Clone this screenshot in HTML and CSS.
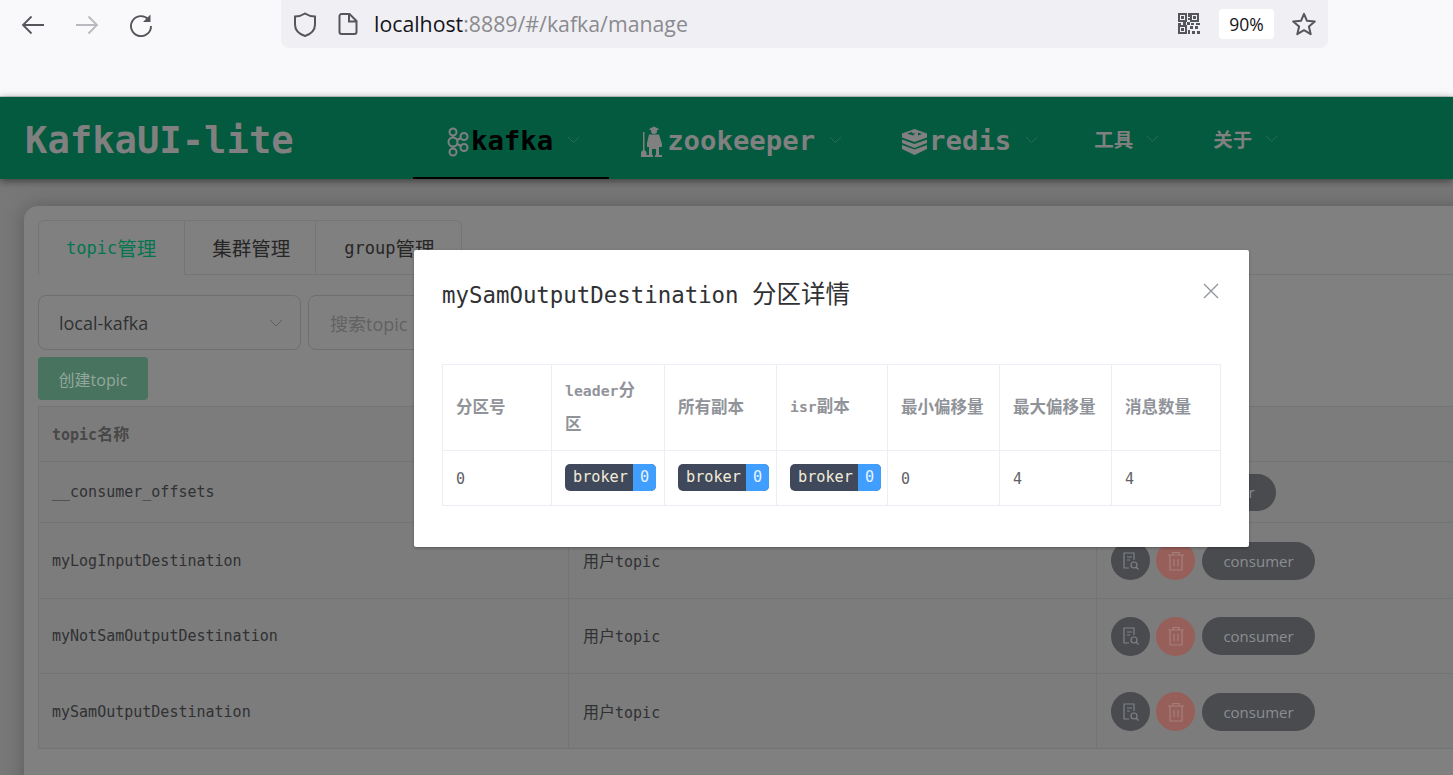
FILE: index.html
```html
<!DOCTYPE html>
<html lang="zh">
<head>
  <meta charset="UTF-8" />
  <title>KafkaUI-lite</title>
  <link rel="stylesheet" href="styles.css">
</head>
<body>

  <div class="browser-bar">
    <div class="nav-btns">
      <svg class="ico" width="24" height="24" viewBox="0 0 24 24"><path d="M23 12H2M10.500 3.500 2 12l8.500 8.500" fill="none" stroke="#55555c" stroke-width="1.800"/></svg>
      <svg class="ico" width="24" height="24" viewBox="0 0 24 24"><path d="M1 12h21M13.500 3.500 22 12l-8.500 8.500" fill="none" stroke="#b9b9bf" stroke-width="1.800"/></svg>
      <svg class="ico" width="24" height="24" viewBox="0 0 24 24"><path d="M19.500 6.500A10 10 0 1 0 22 13" fill="none" stroke="#55555c" stroke-width="1.900"/><path d="M21.500 1.500v7.500H14z" fill="#55555c"/></svg>
    </div>
    <div class="address">
      <svg class="shield" width="24" height="25" viewBox="0 0 24 25"><path d="M12 1.500c3 2 6.500 3 10 3v8c0 5.500-4 9.500-10 11.500C6 22 2 18 2 12.500v-8c3.500 0 7-1 10-3z" fill="none" stroke="#55555c" stroke-width="2"/></svg>
      <svg class="page" width="20" height="22" viewBox="0 0 20 22"><path d="M3.500 1h8l7 7v11a2 2 0 0 1-2 2h-13a2 2 0 0 1-2-2V3a2 2 0 0 1 2-2zM11 1v7.500h7.500" fill="none" stroke="#55555c" stroke-width="2"/></svg>
      <div class="url"><span class="host">localhost</span>:8889/#/kafka/manage</div>
      <svg class="qr" width="22" height="22" viewBox="0 0 22 22" fill="#55555c">
        <path d="M0 0h9v9H0zM2 2v5h5V2zM12 0h9v9h-9zM14 2v5h5V2zM0 12h9v9H0zM2 14v5h5v-5z" fill-rule="evenodd"/>
        <path d="M3 3h3v3H3zM15 3h3v3h-3zM3 15h3v3H3zM10 0h2v4h-2zM10 5h2v2h-2zM0 10h3v2H0zM5 9h3v3H5zM9 9h3v3H9zM13 10h3v2h-3zM18 10h4v2h-4zM12 13h3v3h-3zM17 13h3v3h-3zM10 17h2v4h-2zM14 18h3v3h-3zM19 18h3v3h-3z"/>
      </svg>
      <div class="zoom-chip">90%</div>
      <svg class="star" width="24" height="24" viewBox="0 0 24 24"><path d="M12 1.800l3 7 7.800.7-5.900 5.100 1.800 7.600L12 18.200l-6.700 4 1.800-7.600L1.200 9.500 9 8.800z" fill="none" stroke="#55555c" stroke-width="2" stroke-linejoin="round"/></svg>
    </div>
  </div>

  <div class="page-wrap">
    <header class="top-nav">
      <div class="logo">KafkaUI-lite</div>
      <nav class="menu">
        <a class="menu-item active">
          <svg class="menu-ico" width="25" height="30" viewBox="-2 0 25 30" fill="none" stroke="#808080" stroke-width="2"><circle cx="7" cy="5" r="3.500"/><circle cx="7" cy="15" r="4.500"/><circle cx="7" cy="25" r="3.500"/><circle cx="18" cy="9.500" r="3.500"/><circle cx="18" cy="20.500" r="3.500"/><path d="M7 8.500v2M7 19.500v2M11 13l4-2M11 17l4 2"/></svg>
          <span>kafka</span>
          <svg class="chev" width="13" height="8" viewBox="0 0 13 8"><path d="M1 1l5.500 5.500L12 1" fill="none" stroke="#2a6a52" stroke-width="1"/></svg>
        </a>
        <a class="menu-item">
          <svg class="menu-ico" width="25" height="32" viewBox="0 0 25 32" fill="#808080"><circle cx="14" cy="5" r="3"/><path d="M10 2.500l4-2 4 2 1 1.500h-10zM9 8.500h10l3 9.500v3h-3v8h-3v-6h-4v6H9v-8H7v-4zM1 31v-5l2-2V6h1.500v18l2 2v5z"/><path d="M15 29h7v2h-7zM6 29h7v2H6z"/></svg>
          <span>zookeeper</span>
          <svg class="chev" width="13" height="8" viewBox="0 0 13 8"><path d="M1 1l5.500 5.500L12 1" fill="none" stroke="#2a6a52" stroke-width="1"/></svg>
        </a>
        <a class="menu-item">
          <svg class="menu-ico redis-ico" width="27" height="26" viewBox="0 0 27 26" fill="#808080"><path d="M13.500 0 26 4.500v4L13.500 13 1 8.500v-4z"/><path d="M1 10.500l12.500 4.500L26 10.500v3.500L13.500 19 1 14z"/><path d="M1 16l12.500 4.500L26 16v4l-12.500 6L1 20z"/><path d="M6 4.500l5-1.500.8 1.500 2.700-.5-2.500 2.500z" fill="#035a3e"/><path d="M17 3.500l4 1.500-4 1.500z" fill="#035a3e"/></svg>
          <span>redis</span>
          <svg class="chev" width="13" height="8" viewBox="0 0 13 8"><path d="M1 1l5.500 5.500L12 1" fill="none" stroke="#2a6a52" stroke-width="1"/></svg>
        </a>
        <a class="menu-item small">
          <span>工具</span>
          <svg class="chev" width="13" height="8" viewBox="0 0 13 8"><path d="M1 1l5.500 5.500L12 1" fill="none" stroke="#2a6a52" stroke-width="1"/></svg>
        </a>
        <a class="menu-item small">
          <span>关于</span>
          <svg class="chev" width="13" height="8" viewBox="0 0 13 8"><path d="M1 1l5.500 5.500L12 1" fill="none" stroke="#2a6a52" stroke-width="1"/></svg>
        </a>
      </nav>
    </header>

    <main class="card">
      <div class="tabs">
        <div class="tab active">topic<span class="cn">管理</span></div>
        <div class="tab"><span class="cn">集群管理</span></div>
        <div class="tab">group<span class="cn">管理</span></div>
      </div>

      <div class="filters">
        <div class="select">
          <span>local-kafka</span>
          <svg width="14" height="8" viewBox="0 0 14 8"><path d="M1 1l6 6 6-6" fill="none" stroke="#5e5e5e" stroke-width="1"/></svg>
        </div>
        <div class="search">搜索topic</div>
      </div>
      <div class="create-btn">创建topic</div>

      <table class="topic-table">
        <colgroup>
          <col class="c1"><col class="c2"><col class="c3">
        </colgroup>
        <tr class="head-row"><th>topic<span class="cn">名称</span></th><th></th><th></th></tr>
        <tr class="r1">
          <td>__consumer_offsets</td>
          <td></td>
          <td><div class="actions"><button class="pill shifted small-pill">consumer</button></div></td>
        </tr>
        <tr class="r2">
          <td>myLogInputDestination</td>
          <td><span class="cn">用户</span>topic</td>
          <td>
            <div class="actions">
              <button class="round"><svg width="20" height="20" viewBox="0 0 20 20" fill="none" stroke="#7d8185" stroke-width="1.200"><path d="M8 17H3V2h10v7M6 6h5M6 9h3"/><circle cx="13" cy="14" r="3"/><path d="M15 16l2.500 2.500"/></svg></button>
              <button class="round danger"><svg width="18" height="20" viewBox="0 0 18 20" fill="none" stroke="#a8807b" stroke-width="1.200"><path d="M1 4h16M6 4V1.500h6V4M3 4v15h12V4M7 8v7M11 8v7"/></svg></button>
              <button class="pill">consumer</button>
            </div>
          </td>
        </tr>
        <tr class="r3">
          <td>myNotSamOutputDestination</td>
          <td><span class="cn">用户</span>topic</td>
          <td>
            <div class="actions">
              <button class="round"><svg width="20" height="20" viewBox="0 0 20 20" fill="none" stroke="#7d8185" stroke-width="1.200"><path d="M8 17H3V2h10v7M6 6h5M6 9h3"/><circle cx="13" cy="14" r="3"/><path d="M15 16l2.500 2.500"/></svg></button>
              <button class="round danger"><svg width="18" height="20" viewBox="0 0 18 20" fill="none" stroke="#a8807b" stroke-width="1.200"><path d="M1 4h16M6 4V1.500h6V4M3 4v15h12V4M7 8v7M11 8v7"/></svg></button>
              <button class="pill">consumer</button>
            </div>
          </td>
        </tr>
        <tr class="r4">
          <td>mySamOutputDestination</td>
          <td><span class="cn">用户</span>topic</td>
          <td>
            <div class="actions">
              <button class="round"><svg width="20" height="20" viewBox="0 0 20 20" fill="none" stroke="#7d8185" stroke-width="1.200"><path d="M8 17H3V2h10v7M6 6h5M6 9h3"/><circle cx="13" cy="14" r="3"/><path d="M15 16l2.500 2.500"/></svg></button>
              <button class="round danger"><svg width="18" height="20" viewBox="0 0 18 20" fill="none" stroke="#a8807b" stroke-width="1.200"><path d="M1 4h16M6 4V1.500h6V4M3 4v15h12V4M7 8v7M11 8v7"/></svg></button>
              <button class="pill">consumer</button>
            </div>
          </td>
        </tr>
      </table>
    </main>

    <div class="dialog">
      <div class="dialog-head">
        <div class="dialog-title">mySamOutputDestination <span class="title-cn">分区详情</span></div>
        <svg class="close" width="16" height="16" viewBox="0 0 16 16"><path d="M1 1l14 14M15 1 1 15" stroke="#909399" stroke-width="1.300"/></svg>
      </div>
      <table class="part-table">
        <colgroup>
          <col class="p1"><col class="p2"><col class="p3"><col class="p4"><col class="p5"><col class="p6"><col class="p7">
        </colgroup>
        <tr>
          <th>分区号</th>
          <th><span class="lat">leader</span>分<br>区</th>
          <th>所有副本</th>
          <th><span class="lat">isr</span>副本</th>
          <th>最小偏移量</th>
          <th>最大偏移量</th>
          <th>消息数量</th>
        </tr>
        <tr>
          <td>0</td>
          <td><span class="badge">broker<b>0</b></span></td>
          <td><span class="badge">broker<b>0</b></span></td>
          <td><span class="badge">broker<b>0</b></span></td>
          <td>0</td>
          <td>4</td>
          <td>4</td>
        </tr>
      </table>
    </div>
  </div>

</body>
</html>
```

FILE: styles.css
```css
* {
  box-sizing: border-box;
}
html, body {
  margin: 0;
  height: 100%;
  overflow: hidden;
}
body {
  font-family: "DejaVu Sans Mono", "Noto Sans CJK SC", monospace;
  background: #787878;
}

/* browser toolbar */
.browser-bar {
  height: 97px;
  background: #f9f9fb;
  border-bottom: 1px solid #cfcfd3;
  display: flex;
  align-items: flex-start;
}
.nav-btns {
  width: 281px;
  height: 48px;
  display: flex;
  align-items: center;
  gap: 30px;
  padding: 2px 0 0 21px;
}
.address {
  width: 1047px;
  height: 48px;
  background: #f0f0f4;
  border-radius: 0 0 8px 8px;
  display: flex;
  align-items: center;
}
.shield {
  margin-left: 12px;
}
.page {
  margin-left: 21px;
}
.url {
  margin: 0 0 2px 16px;
  flex: 1;
  font-family: "Open Sans", "Noto Sans", sans-serif;
  font-size: 21.300px;
  color: #8a8a8f;
}
.host {
  color: #15141a;
}
.zoom-chip {
  margin-left: 19px;
  width: 55px;
  height: 30px;
  background: #fff;
  border-radius: 4px;
  font-family: "Open Sans", sans-serif;
  font-size: 17.500px;
  color: #15141a;
  display: flex;
  align-items: center;
  justify-content: center;
}
.star {
  margin: 0 12px 0 18px;
}

/* dimmed app under the dialog */
.page-wrap {
  position: relative;
  height: 678px;
}
.top-nav {
  position: relative;
  height: 82px;
  background: #035a3e;
  box-shadow: 0 2px 8px rgba(0,0,0,0.5);
  display: flex;
  align-items: stretch;
}
.logo {
  width: 413px;
  padding-left: 25px;
  font-size: 37.200px;
  font-weight: bold;
  line-height: 86px;
  color: #808080;
}
.menu {
  display: flex;
}
.menu-item {
  display: flex;
  align-items: center;
  padding: 6px 29px 0 28px;
  font-size: 27.300px;
  font-weight: bold;
  color: #808080;
  border-bottom: 2px solid transparent;
}
.menu-item.active {
  color: #000;
  border-bottom-color: #000;
}
.menu-item.small {
  padding: 3px 27px 0;
  font-size: 19.500px;
  font-family: "Noto Sans CJK SC", sans-serif;
}
.menu-ico {
  margin: 4px 2px 0 3px;
}
.redis-ico {
  margin: 4px 1px 0 2px;
}
.chev {
  margin-left: 14px;
}
.menu-item.small .chev {
  margin-left: 13px;
  margin-top: 1px;
}

.card {
  width: 1500px;
  height: 600px;
  margin: 27px 0 0 24px;
  padding: 14px;
  background: #808080;
  border-radius: 14px 0 0 0;
  box-shadow: 0 0 20px rgba(0,0,0,0.25);
}
.cn {
  font-family: "Noto Sans CJK SC", sans-serif;
}
.tabs {
  display: flex;
  height: 55px;
  border-bottom: 1px solid #747578;
}
.tab {
  height: 55px;
  padding: 0 25px 0 27px;
  display: flex;
  align-items: center;
  font-size: 17px;
  color: #262626;
  background: #808080;
  border: 1px solid #747578;
  border-left: 0;
}
.tab:first-child {
  padding: 0 28px 0 27px;
  border-left: 1px solid #747578;
  border-radius: 6px 0 0 0;
}
.tab:nth-child(3) {
  padding: 0 27px 0 28px;
  border-radius: 0 6px 0 0;
}
.tab.active {
  color: #03764f;
  border-bottom-color: #808080;
}
.tab .cn {
  font-size: 19.500px;
}

.filters {
  display: flex;
  gap: 7px;
  margin-top: 20px;
}
.select {
  width: 263px;
  height: 55px;
  border: 1px solid #6e6f72;
  border-radius: 8px;
  padding: 0 17px 0 20px;
  display: flex;
  align-items: center;
  justify-content: space-between;
  font-family: "Open Sans", "Noto Sans", sans-serif;
  font-size: 18px;
  color: #303133;
}
.search {
  width: 300px;
  height: 55px;
  border: 1px solid #6e6f72;
  border-radius: 8px;
  padding-left: 21px;
  display: flex;
  align-items: center;
  font-family: "Open Sans", "Noto Sans CJK SC", sans-serif;
  font-size: 18px;
  color: #626262;
}
.create-btn {
  width: 110px;
  height: 43px;
  margin-top: 7px;
  background: #47735f;
  border-radius: 4px;
  display: flex;
  align-items: center;
  justify-content: center;
  font-family: "Open Sans", "Noto Sans CJK SC", sans-serif;
  font-size: 16px;
  color: #94a79d;
}

.topic-table {
  margin-top: 6px;
  border-collapse: collapse;
  table-layout: fixed;
  width: 1440px;
  background: #7c7c7c;
  font-size: 15px;
  line-height: 20px;
  color: #303133;
}
.c1 { width: 530px; }
.c2 { width: 528px; }
.topic-table th, .topic-table td {
  border: 1px solid #737478;
  padding: 0 14px 0 13px;
  text-align: left;
}
.topic-table th {
  font-size: 15px;
  color: #484848;
}
.topic-table .cn {
  font-size: 16px;
}
.head-row { height: 55px; }
.r1 { height: 61px; }
.r2 { height: 76px; }
.r3 { height: 75px; }
.r4 { height: 75px; }
.topic-table td:nth-child(n+2) {
  padding-left: 14px;
}
.topic-table .r4 td {
  padding-top: 1px;
}
.actions {
  display: flex;
  align-items: center;
  gap: 6px;
}
.round {
  width: 39px;
  height: 39px;
  border: 0;
  padding: 0;
  border-radius: 50%;
  background: #4a4b4f;
  display: flex;
  align-items: center;
  justify-content: center;
}
.round.danger {
  background: #965f5a;
}
.pill {
  width: 113px;
  height: 38px;
  margin-left: 1px;
  border: 0;
  border-radius: 19px;
  background: #4a4b4f;
  font-family: "Open Sans", "Noto Sans", sans-serif;
  font-size: 15px;
  color: #8b8e91;
}
.pill.shifted {
  margin-left: 52px;
}
.pill.small-pill {
  height: 37px;
}

/* dialog */
.dialog {
  position: absolute;
  left: 414px;
  top: 153px;
  width: 835px;
  height: 297px;
  padding: 0 28px;
  background: #fff;
  border-radius: 2px;
  box-shadow: 0 1px 3px rgba(0,0,0,0.3);
}
.dialog-head {
  height: 114px;
  display: flex;
  justify-content: space-between;
  padding-top: 27px;
}
.dialog-title {
  font-size: 22.400px;
  line-height: 32px;
  color: #303133;
}
.title-cn {
  font-family: "Noto Sans CJK SC", sans-serif;
  font-size: 24.500px;
}
.close {
  margin: 6px 2px 0 0;
}
.part-table {
  border-collapse: collapse;
  table-layout: fixed;
  width: 778px;
  font-size: 15px;
  color: #606266;
}
.p1 { width: 109px; }
.p2 { width: 113px; }
.p3 { width: 112px; }
.p4 { width: 111px; }
.p5 { width: 112px; }
.p6 { width: 112px; }
.p7 { width: 109px; }
.part-table th, .part-table td {
  border: 1px solid #ebeef5;
  padding: 0 13px;
  text-align: left;
}
.part-table th {
  height: 86px;
  padding-bottom: 3px;
  font-family: "Noto Sans CJK SC", sans-serif;
  font-size: 16.500px;
  font-weight: bold;
  line-height: 32px;
  color: #909399;
}
.part-table .lat {
  font-family: "DejaVu Sans Mono", monospace;
  font-size: 14.800px;
}
.part-table td {
  height: 55px;
  padding-top: 2px;
}
.badge {
  display: inline-flex;
  align-items: center;
  height: 27px;
  width: 91px;
  margin-bottom: 4px;
  padding-left: 8px;
  background: #40485b;
  border-radius: 5px;
  overflow: hidden;
  font-size: 15.200px;
  color: #f2ecd8;
  justify-content: space-between;
}
.badge b {
  width: 23px;
  height: 27px;
  background: #409eff;
  font-weight: normal;
  text-align: center;
  line-height: 27px;
  color: #e8f2ff;
}
```
